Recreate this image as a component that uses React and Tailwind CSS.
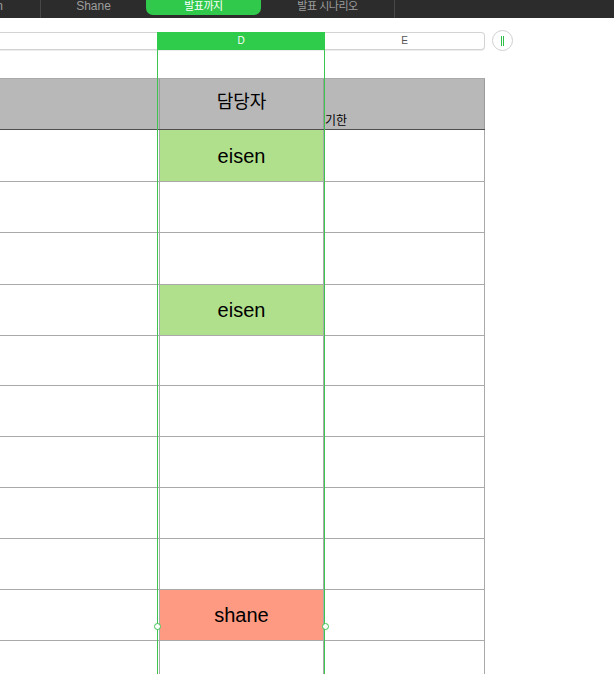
import React from 'react';

const ROWS = [
  { who: 'eisen', tone: 'green', h: 'h-[52px]' },
  { h: 'h-[51px]' },
  { h: 'h-[52px]' },
  { who: 'eisen', tone: 'green', h: 'h-[51px]' },
  { h: 'h-[50px]' },
  { h: 'h-[51px]' },
  { h: 'h-[51px]' },
  { h: 'h-[51px]' },
  { h: 'h-[51px]' },
  { who: 'shane', tone: 'red', h: 'h-[51px]' },
  { h: 'h-[51px]' },
];

const TONES = {
  green: 'bg-[#b1e08d]',
  red: 'bg-[#fe9a82]',
};

function Tab({ label, className = '', sep = true }) {
  return (
    <div className={`flex h-full shrink-0 items-start justify-center ${sep ? 'border-r border-[#474747]' : ''} ${className}`}>
      <span className="text-[12px] leading-[12px] text-[#9d9d9d]">{label}</span>
    </div>
  );
}

function Row({ who, tone, h }) {
  return (
    <div className={`grid ${h} grid-cols-[160px_164px_161px] border-b border-[#a9a9a9]`}>
      <div className="border-r border-[#a9a9a9]" />
      <div className={`flex items-center justify-center border-r border-[#a9a9a9] ${tone ? TONES[tone] : ''}`}>
        {who && <span className="text-[20px] text-black">{who}</span>}
      </div>
      <div className="border-r border-[#a9a9a9]" />
    </div>
  );
}

export default function App() {
  return (
    <div className="relative h-[674px] w-[614px] overflow-hidden bg-white font-['Liberation_Sans','Noto_Sans_CJK_KR',sans-serif]">
      {/* ── Sheet tabs ── */}
      <div className="flex h-[18px] items-start bg-[#2c2c2c]">
        <Tab label="Eisen" className="-ml-[64px] w-[105px]" />
        <Tab label="Shane" className="w-[105px]" sep={false} />
        <div className="flex h-[15px] w-[115px] shrink-0 items-start justify-center rounded-b-[7px] bg-[#30c94b]">
          <span className="text-[11px] leading-[12px] tracking-[-0.5px] text-white">발표까지</span>
        </div>
        <div className="flex h-full w-[134px] shrink-0 items-start justify-center border-r border-[#474747]">
          <span className="text-[11px] leading-[12px] tracking-[-0.5px] text-[#9d9d9d]">발표 시나리오</span>
        </div>
      </div>

      {/* ── Column letters ── */}
      <div className="mt-[12px] flex items-center">
        <div className="flex h-[18px] w-[485px] items-stretch rounded-r-[4px] border border-l-0 border-[#d3d3d3] shadow-[0_1px_0_#ececec]">
          <div className="w-[157px]" />
          <div className="-my-px flex w-[168px] items-center justify-center bg-[#2fcb4a] text-[10px] text-white">D</div>
          <div className="flex flex-1 items-center justify-center text-[10px] text-[#555]">E</div>
        </div>
        <div className="ml-[7px] flex h-[21px] w-[21px] items-center justify-center gap-[1.5px] rounded-full border border-[#cfcfcf] bg-white">
          <span className="h-[10px] w-px bg-[#2fbf48]" />
          <span className="h-[10px] w-px bg-[#2fbf48]" />
        </div>
      </div>

      {/* ── Table ── */}
      <div className="mt-[27px] w-[485px]">
        <div className="grid h-[52px] grid-cols-[160px_164px_161px] border-y border-t-[#a9a9a9] border-b-[#4f4f4f] bg-[#b8b8b8]">
          <div className="border-r border-[#9a9a9a]" />
          <div className="flex items-center justify-center border-r border-[#9a9a9a] pb-[3px]">
            <span className="text-[18px] text-black">담당자</span>
          </div>
          <div className="flex items-end border-r border-[#9a9a9a] pb-[1px] pl-[1px]">
            <span className="text-[12px] leading-[14px] text-black">기한</span>
          </div>
        </div>
        {ROWS.map((r, i) => (
          <Row key={i} who={r.who} tone={r.tone} h={r.h} />
        ))}
      </div>

      {/* ── Selected column overlay ── */}
      <div className="pointer-events-none absolute bottom-0 left-[157px] top-[48px] w-[168px] border-x border-[#3cc54f]">
        <span className="absolute -left-[4.5px] top-[575px] h-[7px] w-[7px] rounded-full border border-[#3cc54f] bg-white" />
        <span className="absolute -right-[4.5px] top-[575px] h-[7px] w-[7px] rounded-full border border-[#3cc54f] bg-white" />
      </div>
    </div>
  );
}
